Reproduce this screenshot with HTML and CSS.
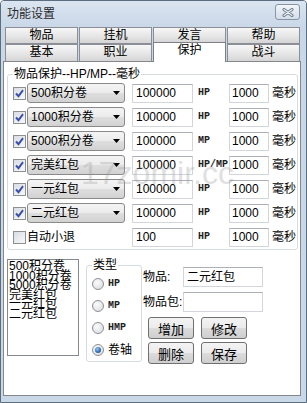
FILE: index.html
```html
<!DOCTYPE html>
<html>
<head>
  <title>功能设置</title>
  <link rel="stylesheet" href="styles.css">
</head>
<body>
  <div class="window">
    <div class="titlebar">
      <span class="title">功能设置</span>
      <span class="close">
        <svg width="12" height="9" viewBox="0 0 12 9">
          <path d="M2 1.5 L10 7.5 M10 1.5 L2 7.5" stroke="#6b7a8c" stroke-width="3" stroke-linecap="round"/>
          <path d="M2 1.5 L10 7.5 M10 1.5 L2 7.5" stroke="#eef2f6" stroke-width="1.2" stroke-linecap="round"/>
        </svg>
      </span>
    </div>

    <div class="tabs">
      <div class="tab-row">
        <div class="tab">物品</div>
        <div class="tab">挂机</div>
        <div class="tab">发言</div>
        <div class="tab">帮助</div>
      </div>
      <div class="tab-row front">
        <div class="tab">基本</div>
        <div class="tab">职业</div>
        <div class="tab active">保护</div>
        <div class="tab">战斗</div>
      </div>
    </div>

    <div class="panel">
      <fieldset class="group">
        <legend>物品保护--HP/MP--毫秒</legend>

        <div class="row">
          <span class="check on"><svg width="11" height="11" viewBox="0 0 11 11"><path d="M2 5.5 L4.5 8.2 L9 2.2" fill="none" stroke="#3d50a8" stroke-width="2"/></svg></span>
          <span class="combo"><span>500积分卷</span><svg width="7" height="4"><path d="M0 0H7L3.5 4Z"/></svg></span>
          <span class="field wide">100000</span>
          <span class="kind">HP</span>
          <span class="field short">1000</span>
          <span class="unit">毫秒</span>
        </div>
        <div class="row">
          <span class="check on"><svg width="11" height="11" viewBox="0 0 11 11"><path d="M2 5.5 L4.5 8.2 L9 2.2" fill="none" stroke="#3d50a8" stroke-width="2"/></svg></span>
          <span class="combo"><span>1000积分卷</span><svg width="7" height="4"><path d="M0 0H7L3.5 4Z"/></svg></span>
          <span class="field wide">100000</span>
          <span class="kind">HP</span>
          <span class="field short">1000</span>
          <span class="unit">毫秒</span>
        </div>
        <div class="row">
          <span class="check on"><svg width="11" height="11" viewBox="0 0 11 11"><path d="M2 5.5 L4.5 8.2 L9 2.2" fill="none" stroke="#3d50a8" stroke-width="2"/></svg></span>
          <span class="combo"><span>5000积分卷</span><svg width="7" height="4"><path d="M0 0H7L3.5 4Z"/></svg></span>
          <span class="field wide">100000</span>
          <span class="kind">MP</span>
          <span class="field short">1000</span>
          <span class="unit">毫秒</span>
        </div>
        <div class="row">
          <span class="check on"><svg width="11" height="11" viewBox="0 0 11 11"><path d="M2 5.5 L4.5 8.2 L9 2.2" fill="none" stroke="#3d50a8" stroke-width="2"/></svg></span>
          <span class="combo"><span>完美红包</span><svg width="7" height="4"><path d="M0 0H7L3.5 4Z"/></svg></span>
          <span class="field wide">100000</span>
          <span class="kind">HP/MP</span>
          <span class="field short">1000</span>
          <span class="unit">毫秒</span>
        </div>
        <div class="row">
          <span class="check on"><svg width="11" height="11" viewBox="0 0 11 11"><path d="M2 5.5 L4.5 8.2 L9 2.2" fill="none" stroke="#3d50a8" stroke-width="2"/></svg></span>
          <span class="combo"><span>一元红包</span><svg width="7" height="4"><path d="M0 0H7L3.5 4Z"/></svg></span>
          <span class="field wide">100000</span>
          <span class="kind">HP</span>
          <span class="field short">1000</span>
          <span class="unit">毫秒</span>
        </div>
        <div class="row">
          <span class="check on"><svg width="11" height="11" viewBox="0 0 11 11"><path d="M2 5.5 L4.5 8.2 L9 2.2" fill="none" stroke="#3d50a8" stroke-width="2"/></svg></span>
          <span class="combo"><span>二元红包</span><svg width="7" height="4"><path d="M0 0H7L3.5 4Z"/></svg></span>
          <span class="field wide">100000</span>
          <span class="kind">HP</span>
          <span class="field short">1000</span>
          <span class="unit">毫秒</span>
        </div>
        <div class="row">
          <span class="check"></span>
          <span class="check-label">自动小退</span>
          <span class="field wide">100</span>
          <span class="kind">HP</span>
          <span class="field short">1000</span>
          <span class="unit">毫秒</span>
        </div>
      </fieldset>

      <div class="bottom">
        <div class="listbox">
          <div>500积分卷</div>
          <div>1000积分卷</div>
          <div>5000积分卷</div>
          <div>完美红包</div>
          <div>一元红包</div>
          <div>二元红包</div>
        </div>

        <fieldset class="types">
          <legend>类型</legend>
          <div class="radio-row"><span class="radio"></span><span class="kind">HP</span></div>
          <div class="radio-row"><span class="radio"></span><span class="kind">MP</span></div>
          <div class="radio-row"><span class="radio"></span><span class="kind">HMP</span></div>
          <div class="radio-row"><span class="radio on"><span class="dot"></span></span><span class="cjk">卷轴</span></div>
        </fieldset>

        <div class="editor">
          <div class="edit-row"><span class="edit-label">物品:</span><span class="field edit">二元红包</span></div>
          <div class="edit-row"><span class="edit-label">物品包:</span><span class="field edit"></span></div>
          <div class="buttons">
            <button>增加</button>
            <button>修改</button>
            <button>删除</button>
            <button>保存</button>
          </div>
        </div>
      </div>
    </div>

    <div class="watermark">17zomir.cc</div>
  </div>
</body>
</html>
```

FILE: styles.css
```css
body { margin: 0; font-family: "Liberation Sans", "Noto Sans CJK SC", sans-serif; font-size: 12px; color: #000; }

.window { position: relative; width: 307px; height: 403px; box-sizing: border-box; border: 1px solid #5d6d80; border-radius: 4px 4px 0 0; background: #cad7e6; overflow: hidden; }

.titlebar { height: 26px; display: flex; align-items: center; justify-content: space-between; padding: 0 6px 0 6px; background: linear-gradient(#dbe5f1, #c9d7e7); }
.title { font-size: 12px; line-height: 12px; color: #2a2a2a; }
.close { width: 25px; height: 16px; box-sizing: border-box; margin-top: -4px; border: 1px solid #8694a6; border-radius: 3px; background: linear-gradient(#f2f5f9, #d5dde8); display: flex; align-items: center; justify-content: center; }

.tabs { margin-left: 4px; }
.tab-row { display: flex; gap: 1px; height: 17px; }
.tab { width: 73px; height: 17px; box-sizing: border-box; border: 1px solid #8b8e96; background: linear-gradient(#f7f7f7, #e4e4e4 60%, #d4d4d4); font-size: 12px; line-height: 15px; text-align: center; }
.front .tab { border-bottom: none; }
.tab.active { position: relative; z-index: 1; height: 20px; margin-top: -2px; background: #fff; border-color: #7d7f86; line-height: 14px; }

.panel { width: 298px; height: 335px; box-sizing: border-box; margin-left: 2px; border: 1px solid #84878e; background: #fff; padding: 0 3px; }

.group { margin: 6px 0 0; padding: 1px 0 0 5px; width: 291px; box-sizing: border-box; border: 1px solid #d5dbe0; border-radius: 3px; }
.group legend, .types legend { padding: 0 1px; font-size: 12px; line-height: 12px; }

.row { display: flex; align-items: center; height: 24px; }

.check { width: 13px; height: 13px; box-sizing: border-box; flex: none; margin-right: 1px; border: 1px solid #8f9092; background: linear-gradient(135deg, #d9dde3, #f7f8fa); display: flex; align-items: center; justify-content: center; }

.combo { width: 98px; height: 20px; box-sizing: border-box; flex: none; margin-right: 7px; padding: 0 4px 0 3px; border: 1px solid #8a8a8a; border-radius: 3px; background: linear-gradient(#f4f4f4, #ececec 50%, #dedede 50%, #d2d2d2); display: flex; align-items: center; justify-content: space-between; font-size: 12px; line-height: 12px; }
.check-label { width: 98px; flex: none; margin-right: 7px; font-size: 12px; line-height: 12px; }

.field { height: 19px; box-sizing: border-box; flex: none; border: 1px solid #d2d6dc; border-top-color: #acb0b8; background: #fff; display: flex; align-items: center; font-size: 12px; line-height: 12px; }
.field.wide { width: 61px; margin-right: 5px; padding-left: 3px; }
.field.short { width: 40px; padding-left: 2px; }
.kind { width: 31px; flex: none; font-family: "Liberation Mono", monospace; font-size: 10px; line-height: 10px; font-weight: bold; color: #1e1e1e; }
.unit { margin-left: 3px; font-size: 12px; line-height: 12px; }

.bottom { display: flex; align-items: flex-start; margin-top: 9px; }

.listbox { width: 72px; height: 97px; box-sizing: border-box; flex: none; padding: 2px 0 0 1px; border: 1px solid #858990; font-size: 12px; line-height: 9.5px; }

.types { width: 56px; box-sizing: border-box; flex: none; margin: 0 0 0 7px; padding: 2px 0 0 5px; border: 1px solid #d5dbe0; border-radius: 3px; }
.radio-row { display: flex; align-items: center; height: 22px; }
.radio { width: 12px; height: 12px; box-sizing: border-box; flex: none; margin-right: 4px; border: 1px solid #8d8f93; border-radius: 50%; background: radial-gradient(circle at 40% 35%, #fbfbfb, #d6d9dd); display: flex; align-items: center; justify-content: center; }
.radio .dot { width: 6px; height: 6px; border-radius: 50%; background: radial-gradient(circle at 40% 35%, #9cc8f2, #2b68b0 60%, #143f78); }
.types .kind { width: auto; }
.cjk { font-size: 12px; line-height: 12px; }

.editor { margin-left: 1px; padding-top: 8px; }
.edit-row { display: flex; align-items: center; margin-bottom: 5px; }
.edit-label { width: 40px; font-size: 12px; line-height: 12px; }
.field.edit { width: 80px; height: 20px; padding-left: 3px; }

.buttons { display: grid; grid-template-columns: 46px 46px; column-gap: 7px; row-gap: 3px; margin-left: 5px; }
button { width: 46px; height: 22px; padding: 0; border: 1px solid #707070; border-radius: 3px; background: linear-gradient(#f3f3f3, #ebebeb 50%, #dcdcdc 50%, #cfcfcf); font-family: "Noto Sans CJK SC", sans-serif; font-size: 13px; line-height: 13px; color: #000; }

.watermark { position: absolute; left: 80px; top: 156px; font-family: "Liberation Sans", sans-serif; font-size: 32px; line-height: 32px; color: #9a9a9a; opacity: 0.3; pointer-events: none; }
```
